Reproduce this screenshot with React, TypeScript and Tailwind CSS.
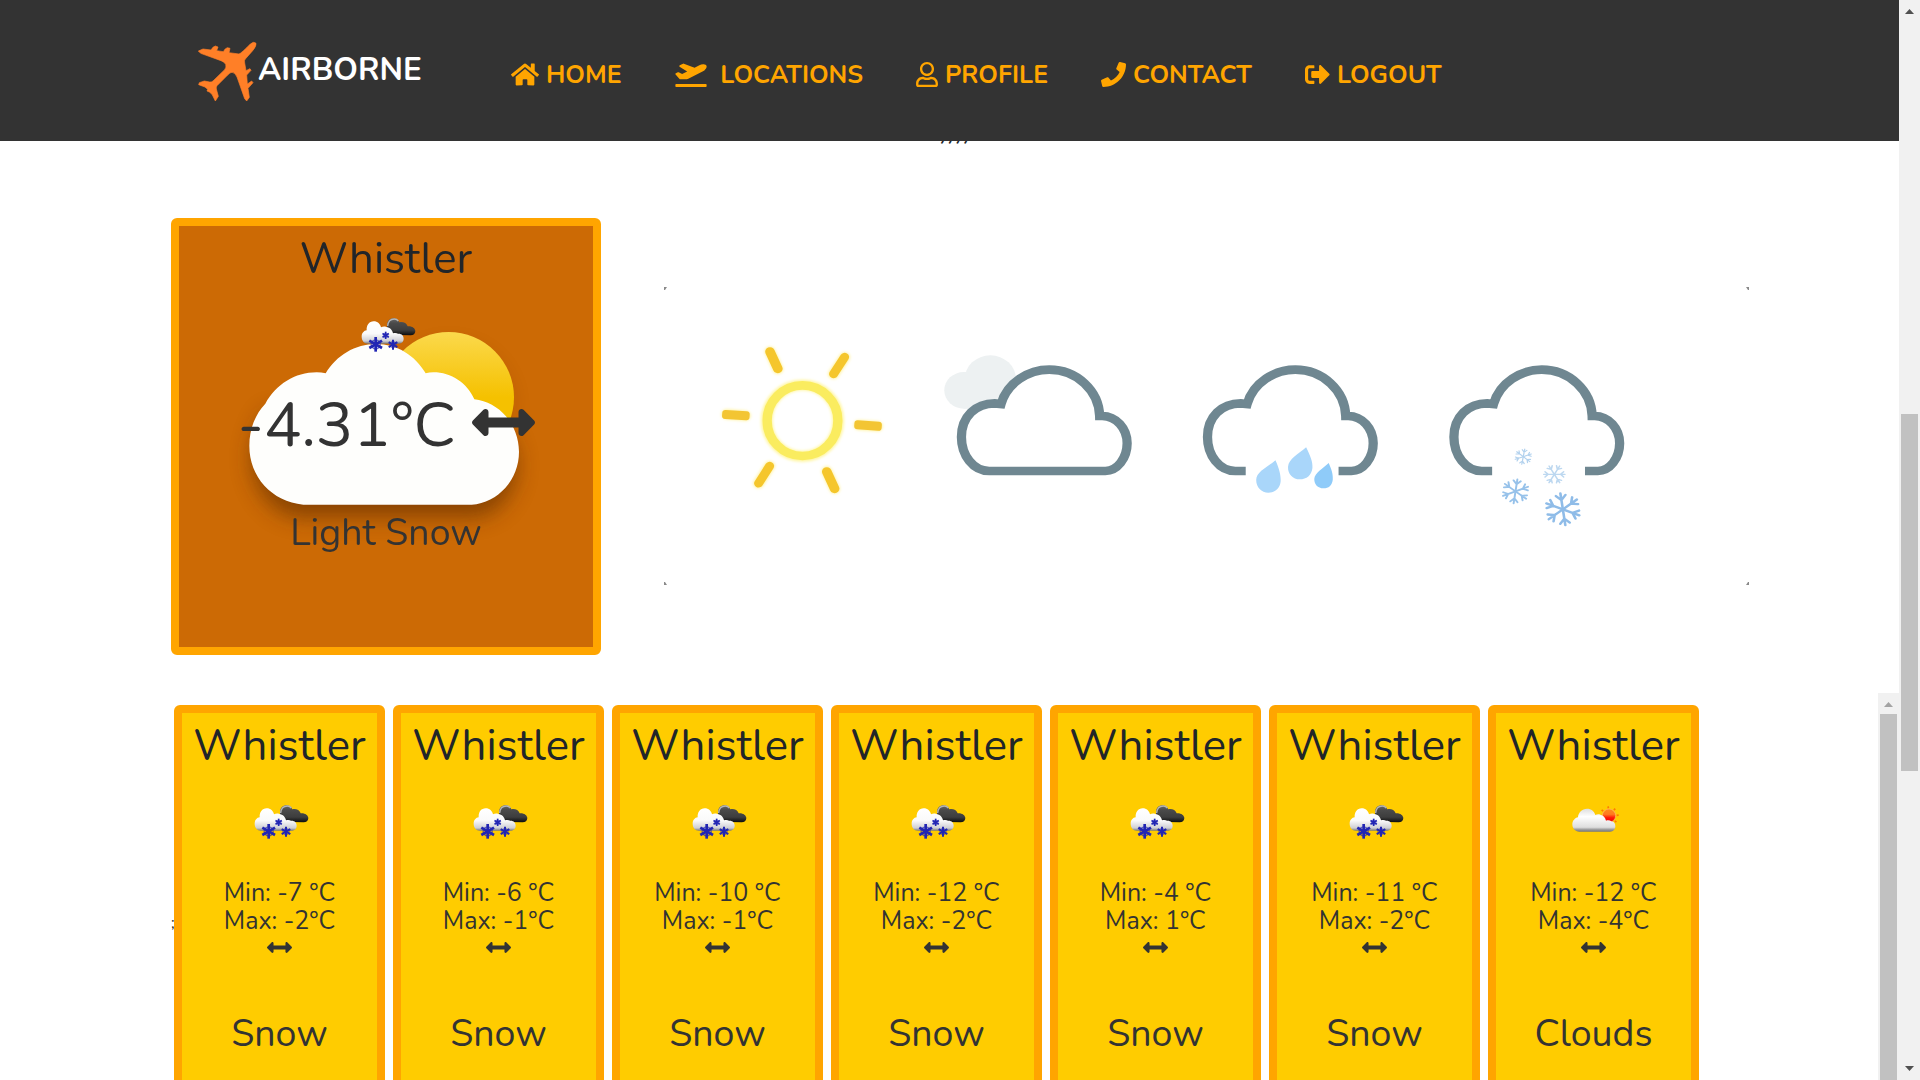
import type { ReactNode } from "react";
import {
  FaArrowsAltH,
  FaHome,
  FaPhone,
  FaPlaneDeparture,
  FaRegUser,
  FaSignOutAlt,
} from "react-icons/fa";

type Day = { min: string; max: string; label: string; kind: "snow" | "clouds" };

const days: Day[] = [
  { min: "-7", max: "-2", label: "Snow", kind: "snow" },
  { min: "-6", max: "-1", label: "Snow", kind: "snow" },
  { min: "-10", max: "-1", label: "Snow", kind: "snow" },
  { min: "-12", max: "-2", label: "Snow", kind: "snow" },
  { min: "-4", max: "1", label: "Snow", kind: "snow" },
  { min: "-11", max: "-2", label: "Snow", kind: "snow" },
  { min: "-12", max: "-4", label: "Clouds", kind: "clouds" },
];

function PlaneLogo() {
  return (
    <svg className="h-[62px] w-[60px]" viewBox="20 18 180 186" fill="#ff7f27" stroke="#ff7f27" strokeWidth="2" strokeLinejoin="round">
      <path d="M24 48L38 42L62 45Q67 35 75 33L83 36L79 47L99 50Q104 40 111 38L119 40L116 53L146 57Q154 54 180 27Q190 18 197 25Q199 33 187 47L165 72Q161 76 163 84L167 107L179 101L182 106L169 120L171 147L184 138L188 143L173 160L177 187L169 198L163 191L140 126Q134 112 125 112Q119 112 112 120L80 152Q77 156 78 162L84 184L75 198L65 178L57 171L50 168L52 163L44 156L25 149L27 143L42 138L58 141Q64 142 68 138L103 104Q109 97 106 88Q102 80 92 77L31 55Z" />
    </svg>
  );
}

function FlakeAsterisk({ x, y, r, w }: { x: number; y: number; r: number; w: number }) {
  return (
    <g transform={`translate(${x} ${y})`} stroke="#2226b4" strokeWidth={w}>
      {[0, 60, 120].map((a) => (
        <line key={a} x1={0} y1={-r} x2={0} y2={r} transform={`rotate(${a})`} />
      ))}
      <circle r={r * 0.62} fill="none" strokeWidth={w * 0.45} opacity={0.7} />
    </g>
  );
}

function SnowIcon({ id }: { id: string }) {
  return (
    <svg className="h-[38px] w-[59px] overflow-visible" viewBox="60 70 177 114">
      <defs>
        <linearGradient id={`${id}-w`} gradientUnits="userSpaceOnUse" x1="0" y1="86" x2="0" y2="153">
          <stop offset="0" stopColor="#ffffff" />
          <stop offset="0.55" stopColor="#fafafa" />
          <stop offset="0.88" stopColor="#cfcfd4" />
          <stop offset="1" stopColor="#77777c" />
        </linearGradient>
        <linearGradient id={`${id}-d`} gradientUnits="userSpaceOnUse" x1="0" y1="76" x2="0" y2="128">
          <stop offset="0" stopColor="#6a6a6a" />
          <stop offset="0.3" stopColor="#4a4a4a" />
          <stop offset="0.7" stopColor="#3d3d3d" />
          <stop offset="1" stopColor="#0c0c0c" />
        </linearGradient>
      </defs>
      <path
        d="M150 126L150 98C150 84 159 77 169 77C177 77 184 81 187 89C196 86 209 90 212 101C226 100 234 107 235 115C235 123 229 128 221 128Z"
        fill={`url(#${id}-d)`}
      />
      <path d="M152 100C153 87 161 79 172 79C177 79 181 81 184 85" fill="none" stroke="#b5b5b5" strokeWidth="4" />
      <path
        d="M93 153C81 153 74 143 74 132C74 121 81 114 89 113C88 98 96 86 110 86C122 86 130 94 132 104C138 101 143 101 148 103C159 104 166 112 168 122C174 120 180 121 183 123C194 122 200 129 200 138C200 147 193 153 183 153Z"
        fill={`url(#${id}-w)`}
      />
      <FlakeAsterisk x={116} y={155} r={22} w={8} />
      <FlakeAsterisk x={146} y={128} r={11} w={5} />
      <FlakeAsterisk x={168} y={156} r={15} w={6} />
    </svg>
  );
}

function CloudsIcon() {
  return (
    <svg className="h-[38px] w-[59px] overflow-visible" viewBox="42 70 177 114">
      <defs>
        <linearGradient id="few-w" gradientUnits="userSpaceOnUse" x1="0" y1="86" x2="0" y2="157">
          <stop offset="0" stopColor="#dcdcdc" />
          <stop offset="0.35" stopColor="#ffffff" />
          <stop offset="0.8" stopColor="#dedede" />
          <stop offset="0.9" stopColor="#9a9a9a" />
          <stop offset="1" stopColor="#6f6f78" />
        </linearGradient>
        <linearGradient id="few-s" x1="0" y1="0" x2="0" y2="1">
          <stop offset="0" stopColor="#ff8a1c" />
          <stop offset="0.4" stopColor="#ff7a20" />
          <stop offset="0.65" stopColor="#ff1a08" />
          <stop offset="1" stopColor="#f00000" />
        </linearGradient>
      </defs>
      <g transform="translate(177 109)" stroke="#ff7a00" strokeWidth="5">
        {[0, 45, 90, 135, 180, 225, 270, 315].map((a) => (
          <line key={a} x1={0} y1={-23} x2={0} y2={-29} transform={`rotate(${a - 5})`} />
        ))}
      </g>
      <circle cx="177" cy="108" r="20" fill="url(#few-s)" stroke="#ffb070" strokeWidth="2" />
      <path
        d="M88 156C75 156 67 146 67 134C67 123 75 115 84 113C85 98 96 87 111 87C124 87 133 95 136 106C140 104 146 103 151 105C160 106 166 114 168 123C174 121 180 122 184 125C193 126 196 133 196 140C196 149 190 156 180 156Z"
        fill="url(#few-w)"
      />
    </svg>
  );
}

function CloudBackdrop() {
  return (
    <svg className="h-full w-full" viewBox="57 78 1242 1263">
      <defs>
        <linearGradient id="sun" x1="0" y1="0" x2="0" y2="1">
          <stop offset="0" stopColor="#fbd94c" />
          <stop offset="0.5" stopColor="#f5c100" />
          <stop offset="1" stopColor="#f5c100" />
        </linearGradient>
        <filter id="soft" x="-30%" y="-30%" width="160%" height="160%">
          <feGaussianBlur stdDeviation="32" />
        </filter>
      </defs>
      <g filter="url(#soft)" fill="#5c2c00" opacity="0.6">
        <path d="M430 953C340 953 276 865 276 775C276 715 300 670 325 635L1030 690C1058 725 1070 760 1070 795C1070 880 1010 953 935 953Z" />
        <circle cx="868" cy="618" r="180" opacity="0.35" />
      </g>
      <circle cx="866" cy="592" r="196" fill="url(#sun)" />
      <path
        d="M430 914C335 905 268 830 268 738C268 685 287 641 316 611C348 553 405 517 470 517Q484 517 497 520C529 466 586 432 648 432C711 432 766 466 797 520Q808 517 820 517C874 517 922 549 943 598C1018 606 1077 674 1077 755C1077 838 1015 908 935 914Z"
        fill="#fefefc"
      />
    </svg>
  );
}

function Crystal({ x, y, r, color, tilt }: { x: number; y: number; r: number; color: string; tilt: number }) {
  return (
    <g transform={`translate(${x} ${y}) rotate(${tilt}) scale(${r / 50})`} stroke={color} strokeWidth="7" strokeLinecap="round" fill="none">
      {[0, 60, 120, 180, 240, 300].map((a) => (
        <path key={a} d="M0 0V-48M-13 -42L0 -28L13 -42" transform={`rotate(${a})`} />
      ))}
    </g>
  );
}

const lobes =
  "L950 603C905 603 872 556 872 501C872 440 912 400 965 400L983 402C1000 338 1060 299 1118 299C1195 299 1257 362 1259 438L1266 438C1305 438 1336 475 1336 520C1336 565 1308 603 1275 603";
const closedCloud = `M979 603${lobes}Z`;
const openCloud = `M979 603${lobes}L1239 603`;

function WeatherBanner() {
  return (
    <svg className="h-[298px] w-[1085px]" viewBox="0 0 1085 298">
      <defs>
        <filter id="glow" x="-20%" y="-20%" width="140%" height="140%">
          <feGaussianBlur stdDeviation="5" />
        </filter>
      </defs>
      <g fill="#8a8a8a">
        <path d="M0 0H3L1 3H0Z" />
        <path d="M1085 0H1082L1084 3H1085Z" />
        <path d="M0 298H3L1 295H0Z" />
        <path d="M1085 298H1082L1084 295H1085Z" />
      </g>
      <g transform="translate(-14 -17) scale(0.35714 0.33333)">
        <ellipse cx="427" cy="452" rx="100" ry="107" fill="none" stroke="#fff59a" strokeWidth="32" filter="url(#glow)" />
        <ellipse cx="427" cy="452" rx="99" ry="106" fill="none" stroke="#faec5f" strokeWidth="26" />
        <g stroke="#fff3a0" strokeWidth="30" strokeLinecap="round" filter="url(#glow)">
          <path d="M336 245L358 297M545 262L514 312M215 433L267 437M585 465L637 469M335 588L304 640M495 604L517 656" />
        </g>
        <g stroke="#f5c62c" strokeLinecap="round" strokeLinejoin="round" fill="none">
          <path d="M336 245L358 296M495 605L517 656" strokeWidth="27" />
          <path d="M545 261L514 312M335 588L304 640" strokeWidth="25" />
        </g>
        <g fill="#f3c533">
          <rect x="202" y="422" width="77" height="27" rx="9" transform="rotate(4 240 435)" />
          <rect x="572" y="453" width="77" height="27" rx="9" transform="rotate(4 611 467)" />
        </g>
        <g fill="#edf1f2">
          <circle cx="953" cy="328" r="72" />
          <circle cx="879" cy="361" r="55" />
          <path d="M878 306H953V416H878Z" />
        </g>
        <path d={closedCloud} fill="#ffffff" stroke="#6f8791" strokeWidth="26" />
        <path d={openCloud} fill="none" stroke="#6f8791" strokeWidth="26" transform="translate(689 0)" />
        <path d={openCloud} fill="none" stroke="#6f8791" strokeWidth="26" transform="translate(1379 0)" />
      </g>
      <g transform="translate(516 -17) scale(0.36991 0.33333)">
        <path d="M258 571C270 600 273 620 272 635C270 656 256 668 239 668C220 668 206 652 206 630C206 605 236 592 258 571Z" fill="#a9d6fa" />
        <path d="M341 532C353 560 359 575 358 594C356 616 342 628 324 628C305 628 291 612 292 590C294 566 320 552 341 532Z" fill="#a9d6fa" />
        <path d="M402 579C410 600 414 612 413 629C411 646 402 655 388 655C372 655 363 643 363 627C364 608 386 596 402 579Z" fill="#8fcbf9" />
        <Crystal x={928} y={560} r={24} color="#b3d2ee" tilt={10} />
        <Crystal x={1012} y={613} r={30} color="#bdd8f0" tilt={30} />
        <Crystal x={907} y={664} r={38} color="#97c2ea" tilt={8} />
        <Crystal x={1035} y={718} r={50} color="#8fbce8" tilt={-8} />
      </g>
    </svg>
  );
}

function NavItem({ icon, children }: { icon: ReactNode; children: ReactNode }) {
  return (
    <a className="flex h-[38px] items-center gap-[7px] whitespace-pre text-[25px] leading-[38px] font-bold text-[#ffa500]">
      <span className="-mt-px">{icon}</span>
      <span>{children}</span>
    </a>
  );
}

function Arrow({ up, color }: { up?: boolean; color: string }) {
  return (
    <svg className={up ? "h-[5px] w-[9px]" : "h-[5px] w-[9px] rotate-180"} viewBox="0 0 9 5" fill={color}>
      <path d="M0 5L4.5 0L9 5Z" />
    </svg>
  );
}

function DayCard({ day, index }: { day: Day; index: number }) {
  return (
    <article className="flex h-[500px] w-[211px] shrink-0 flex-col items-center rounded-[6px] border-8 border-[#ffa500] bg-[#ffcc00] pt-[6px] text-[#333333]">
      <h2 className="text-[43.75px] leading-[54px] font-normal text-[#212529]">Whistler</h2>
      <div className="mt-[30px] h-[38px]">
        {day.kind === "snow" ? <SnowIcon id={`snow-${index}`} /> : <CloudsIcon />}
      </div>
      <p className="mt-[38px] text-[25px] leading-[28px] font-normal">Min: {day.min} °C</p>
      <p className="text-[25px] leading-[28px] font-normal">Max: {day.max}°C</p>
      <FaArrowsAltH className="size-[25px]" />
      <p className="mt-[51px] text-[37.5px] leading-[45px] font-normal">{day.label}</p>
    </article>
  );
}

export default function App() {
  return (
    <div className="flex h-[1080px] w-[1920px] overflow-hidden bg-white font-['Nunito',Lato,sans-serif] text-[#212529]">
      <div className="flex w-[1899px] flex-col">
        <header className="flex h-[141px] shrink-0 items-start bg-[#333333] pl-[197px]">
          <div className="mt-[41px]">
            <PlaneLogo />
          </div>
          <span className="mt-[46px] w-[254px] pl-px text-[31.4px] leading-[48px] font-bold text-white">AIRBORNE</span>
          <nav className="mt-[56px] flex gap-[53px]">
            <NavItem icon={<FaHome className="h-[25px] w-[28px]" />}>HOME</NavItem>
            <NavItem icon={<FaPlaneDeparture className="h-[25px] w-[32px]" />}>{" LOCATIONS"}</NavItem>
            <NavItem icon={<FaRegUser className="h-[25px] w-[22px]" />}>PROFILE</NavItem>
            <NavItem icon={<FaPhone className="size-[25px]" />}>CONTACT</NavItem>
            <NavItem icon={<FaSignOutAlt className="size-[25px]" />}>LOGOUT</NavItem>
          </nav>
        </header>

        <main className="flex h-[552px] shrink-0 flex-col">
          <div className="h-[6px] overflow-hidden pl-[9px] text-center">
            <div className="-mt-[26px] text-[34px] leading-[28px]">,,,,</div>
          </div>
          <div className="mt-[71px] flex pl-[171px]">
            <section className="relative flex h-[437px] w-[430px] flex-col items-center rounded-[6px] border-8 border-[#ffa500] bg-[#cc6a05] text-[#333333]">
              <div className="absolute inset-0">
                <CloudBackdrop />
              </div>
              <div className="relative flex flex-col items-center">
                <h1 className="mt-[6px] text-[43.75px] leading-[54px] font-normal text-[#212529]">Whistler</h1>
                <div className="mt-[30px] h-[38px] pl-px">
                  <SnowIcon id="now" />
                </div>
                <div className="mt-[34px] flex h-[76px] items-center gap-[16px]">
                  <span className="text-[62.5px] leading-[76px] font-normal">-4.31°C</span>
                  <FaArrowsAltH className="mb-[8px] size-[63px]" />
                </div>
                <p className="mt-[46px] text-[37.5px] leading-[45px] font-normal">Light Snow</p>
              </div>
            </section>
            <div className="mt-[69px] ml-[63px]">
              <WeatherBanner />
            </div>
          </div>
        </main>

        <div className="flex h-[387px] shrink-0 overflow-hidden">
          <div className="flex w-[1878px] pt-[12px] pl-[171px]">
            <span className="mt-[208px] h-[20px] w-[3px] shrink-0 overflow-hidden text-[16px] leading-[20px]">;</span>
            <div className="flex gap-2">
              {days.map((day, i) => (
                <DayCard key={i} day={day} index={i} />
              ))}
            </div>
          </div>
          <div className="flex h-full w-[21px] flex-col items-center bg-[#f1f1f1]">
            <div className="flex h-[21px] shrink-0 items-center pt-[2px]">
              <Arrow up color="#a3a3a3" />
            </div>
            <div className="w-[17px] grow bg-[#c1c1c1]" />
          </div>
        </div>
      </div>

      <div className="flex h-full w-[21px] flex-col items-center bg-[#f1f1f1]">
        <div className="flex h-[21px] items-center pt-[2px]">
          <Arrow up color="#505050" />
        </div>
        <div className="mt-[393px] h-[357px] w-[17px] bg-[#c1c1c1]" />
        <div className="mt-auto flex h-[21px] items-center pb-[2px]">
          <Arrow color="#505050" />
        </div>
      </div>
    </div>
  );
}
